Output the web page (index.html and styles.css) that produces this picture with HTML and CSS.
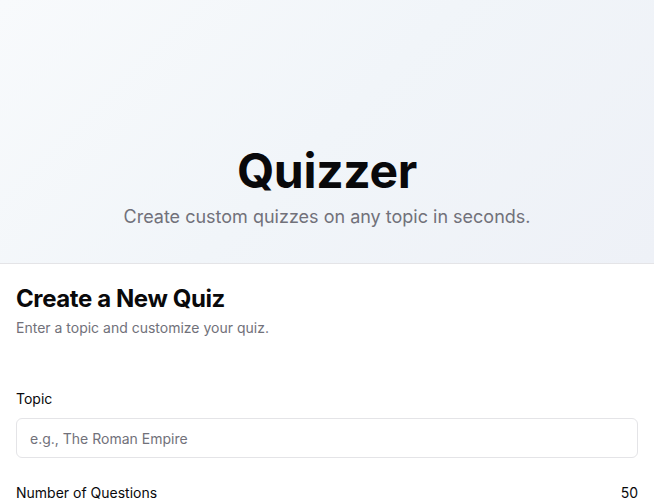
FILE: index.html
```html
<!DOCTYPE html>
<html lang="en">
<head>
<meta charset="utf-8">
<title>Quizzer</title>
<link rel="stylesheet" href="styles.css">
</head>
<body>
  <header class="hero">
    <h1 class="hero-title">Quizzer</h1>
    <p class="hero-sub">Create custom quizzes on any topic in seconds.</p>
  </header>
  <main class="card">
    <div class="card-head">
      <h2 class="card-title">Create a New Quiz</h2>
      <p class="card-desc">Enter a topic and customize your quiz.</p>
    </div>
    <form class="form">
      <div class="field">
        <label class="label" for="topic">Topic</label>
        <input class="input" id="topic" type="text" placeholder="e.g., The Roman Empire">
      </div>
      <div class="field">
        <div class="row">
          <span class="label">Number of Questions</span>
          <span class="value">50</span>
        </div>
      </div>
    </form>
  </main>
</body>
</html>
```
FILE: styles.css
```css
* { box-sizing: border-box; }
html, body { margin: 0; padding: 0; }
body {
  font-family: Inter, "Noto Sans", sans-serif;
  color: #09090b;
  background: #ffffff;
}
.hero {
  height: 264px;
  display: flex;
  flex-direction: column;
  justify-content: flex-end;
  align-items: center;
  padding-bottom: 32px;
  background: linear-gradient(135deg, #f8fafc 0%, #f1f5f9 50%, #eef1f7 100%);
  border-bottom: 1px solid #e4e4e7;
}
.hero-title {
  margin: 0;
  font-size: 48px;
  line-height: 48px;
  font-weight: 700;
  letter-spacing: -0.3px;
}
.hero-sub {
  margin: 8px 0 0;
  font-size: 18px;
  line-height: 28px;
  color: #71717a;
}
.card {
  padding: 19px 16px 0;
}
.card-title {
  margin: 0;
  font-size: 24px;
  line-height: 32px;
  font-weight: 700;
  letter-spacing: -0.4px;
}
.card-desc {
  margin: 3px 0 0;
  font-size: 14px;
  line-height: 20px;
  color: #71717a;
}
.form {
  margin-top: 51px;
  display: flex;
  flex-direction: column;
  gap: 25px;
}
.field {
  display: flex;
  flex-direction: column;
  gap: 9px;
}
.label {
  font-size: 14px;
  line-height: 20px;
  font-weight: 400;
}
.input {
  height: 40px;
  width: 100%;
  border: 1px solid #e4e4e7;
  border-radius: 6px;
  padding: 0 13px;
  font-family: inherit;
  font-size: 14px;
  color: #09090b;
  background: #fff;
  outline: none;
}
.input::placeholder { color: #71717a; }
.row {
  display: flex;
  justify-content: space-between;
  align-items: center;
}
.value {
  font-size: 14px;
  line-height: 20px;
}
```
